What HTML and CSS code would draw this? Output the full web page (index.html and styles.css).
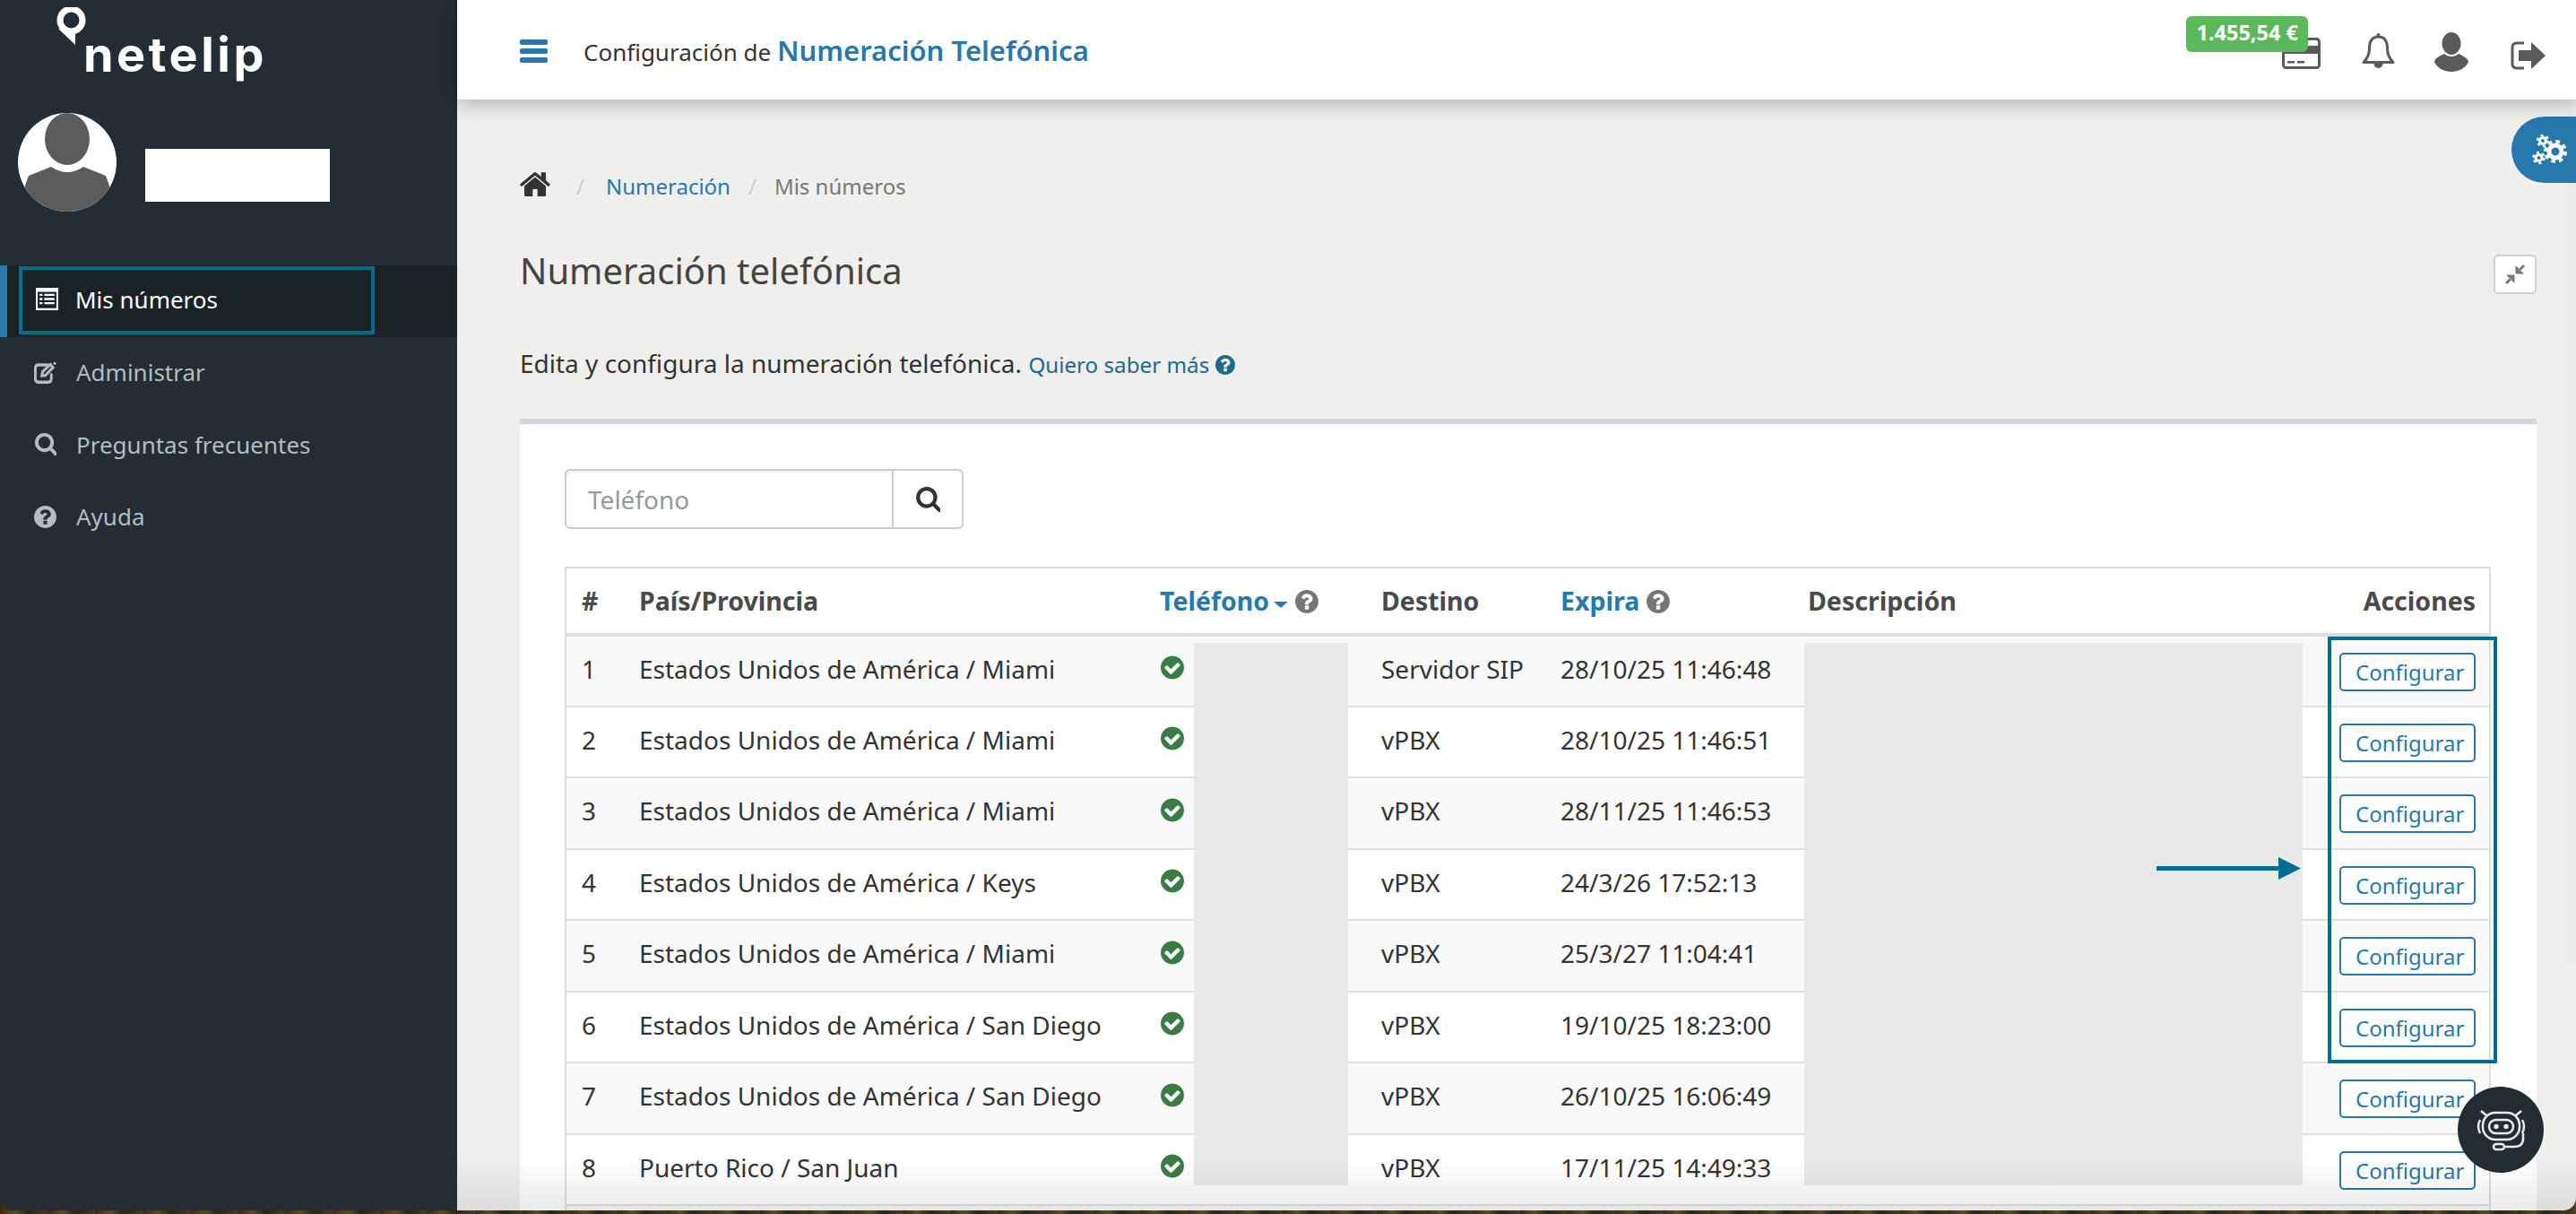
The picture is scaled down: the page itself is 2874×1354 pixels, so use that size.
FILE: index.html
```html
<!DOCTYPE html>
<html lang="es">
<head>
    <meta charset="UTF-8">
    <title>Numeración telefónica</title>
    <link rel="stylesheet" href="styles.css">
</head>
<body>
    <svg class="defs" width="0" height="0">
        <symbol id="i-help" viewBox="128 128 1536 1536"><path d="M1024 1376v-192q0-14-9-23t-23-9h-192q-14 0-23 9t-9 23v192q0 14 9 23t23 9h192q14 0 23-9t9-23zm256-672q0-88-55.500-163t-138.500-116-170-41q-243 0-371 213-15 24 8 42l132 100q7 6 19 6 16 0 25-12 53-68 86-92 34-24 86-24 48 0 85.500 26t37.500 59q0 38-20 61t-68 45q-63 28-115.500 86.500t-52.500 125.500v36q0 14 9 23t23 9h192q14 0 23-9t9-23q0-19 21.500-49.500t54.500-49.500q32-18 49-28.500t46-35 44.500-48 28-60.500 12.500-81zm384 192q0 209-103 385.500t-279.500 279.500-385.500 103-385.500-103-279.500-279.500-103-385.500 103-385.500 279.500-279.500 385.500-103 385.500 103 279.500 279.500 103 385.500z"/></symbol>
        <symbol id="i-check" viewBox="128 128 1536 1536"><path d="M1412 734q0-28-18-46l-91-90q-19-19-45-19t-45 19l-408 407-226-226q-19-19-45-19t-45 19l-91 90q-18 18-18 46 0 27 18 45l362 362q19 19 45 19 27 0 46-19l543-543q18-18 18-45zm252 162q0 209-103 385.500t-279.500 279.500-385.500 103-385.500-103-279.500-279.500-103-385.500 103-385.500 279.500-279.500 385.500-103 385.500 103 279.500 279.500 103 385.500z"/></symbol>
        <symbol id="i-search" viewBox="0 128 1664 1664"><path d="M1216 832q0-185-131.500-316.500t-316.500-131.500-316.500 131.500-131.500 316.500 131.500 316.500 316.500 131.500 316.500-131.500 131.500-316.500zm512 832q0 52-38 90t-90 38q-54 0-90-38l-343-342q-179 124-399 124-143 0-273.500-55.500t-225-150-150-225-55.500-273.500 55.500-273.500 150-225 225-150 273.500-55.500 273.500 55.500 225 150 150 225 55.500 273.500q0 220-124 399l343 343q37 37 37 90z"/></symbol>
    </svg>

    <div class="app">
        <aside class="sidebar">
            <div class="logo">
                <svg class="logo-pin" viewBox="0 0 33 42"><circle cx="16.5" cy="14.500" r="12.500" fill="none" stroke="#fff" stroke-width="7"/><path d="M2 24L21 42V26z" fill="#fff"/></svg>
                <span class="logo-text">netelip</span>
            </div>
            <div class="user-box">
                <svg class="avatar" viewBox="0 0 110 110">
                    <defs><clipPath id="avatar-clip"><circle cx="55" cy="55" r="55"/></clipPath></defs>
                    <circle cx="55" cy="55" r="55" fill="#fff"/>
                    <g clip-path="url(#avatar-clip)" fill="#5c5c5c">
                        <ellipse cx="55" cy="29" rx="25" ry="29"/>
                        <path d="M8 81L12 70 37 60Q55 72 73 60L98 70 102 81 102 110H8z"/>
                    </g>
                </svg>
                <div class="user-name"></div>
            </div>
            <nav class="menu">
                <a class="menu-item active">
                    <span class="focus-box">
                        <svg class="menu-icon" viewBox="0 0 24 22" preserveAspectRatio="none"><path fill="#fff" d="M0 0h24v22H0z"/><path fill="#1a2226" d="M2 4h20v16H2z"/><path fill="#fff" d="M4 6h3v2H4zM9 6h11v2H9zM4 10h3v2H4zM9 10h11v2H9zM4 14h3v2H4zM9 14h11v2H9z"/></svg>
                        Mis números
                    </span>
                </a>
                <a class="menu-item">
                    <svg class="menu-icon" viewBox="0 0 26 22" preserveAspectRatio="none"><path fill="none" stroke="currentColor" stroke-width="3" stroke-linecap="round" d="M20 13v4q0 3.500-3.500 3.500H5Q1.500 20.500 1.500 17V7Q1.500 3.500 5 3.500h11"/><path fill="none" stroke="currentColor" stroke-width="3" d="M9 14l1-4L19 3l3 3-9 8z"/><circle cx="24" cy="2" r="1.500" fill="currentColor"/></svg>
                    Administrar
                </a>
                <a class="menu-item">
                    <svg class="menu-icon" fill="currentColor"><use href="#i-search"/></svg>
                    Preguntas frecuentes
                </a>
                <a class="menu-item">
                    <svg class="menu-icon" fill="currentColor"><use href="#i-help"/></svg>
                    Ayuda
                </a>
            </nav>
        </aside>

        <div class="main">
            <header class="topbar">
                <div class="burger"><i></i><i></i><i></i></div>
                <div class="page-name">Configuración de <b>Numeración Telefónica</b></div>
                <div class="top-icons">
                    <div class="card-wrap">
                        <span class="saldo">1.455,54 €</span>
                        <svg class="ic-card" viewBox="0 0 43 35"><rect x="1.500" y="1.500" width="40" height="32" rx="3" fill="none" stroke="#5a5a5a" stroke-width="3"/><path fill="#5a5a5a" d="M2 9h39v9H2zM6 26h8v2.500H6zM17 26h8v2.500h-8z"/></svg>
                    </div>
                    <svg class="ic-bell" viewBox="0 0 37 40"><path d="M18.500 5C11 5 8.500 11 8.500 18c0 7-2 11-6.500 15.500h33C30.500 29 28.500 25 28.500 18c0-7-2.500-13-10-13z" fill="none" stroke="#5a5a5a" stroke-width="3" stroke-linejoin="round"/><circle cx="18.500" cy="3" r="2" fill="#5a5a5a"/><path d="M13.500 35a5 5 0 0 0 10 0z" fill="#5a5a5a"/></svg>
                    <svg class="ic-user" viewBox="0 0 38 44"><ellipse cx="19" cy="12.500" rx="10.500" ry="12.500" fill="#5a5a5a"/><path d="M0 33c1-5 7-7 11-9 4 4 12 4 16 0 4 2 10 4 11 9-3 7-11 11-19 11S3 40 0 33z" fill="#5a5a5a"/></svg>
                    <svg class="ic-out" viewBox="0 0 39 32"><path d="M15 2H7Q2 2 2 7v18q0 5 5 5h8" fill="none" stroke="#5a5a5a" stroke-width="3"/><path d="M9 10h14V1l16 15-16 15v-9H9z" fill="#5a5a5a"/></svg>
                </div>
            </header>

            <div class="content">
                <ol class="crumbs">
                    <li><svg class="ic-home" viewBox="90 200 1612 1340"><path d="M1472 992v480q0 26-19 45t-45 19h-384v-384h-256v384h-384q-26 0-45-19t-19-45v-480q0-1 .5-3t.5-3l575-474 575 474q1 2 1 6zm223-69l-62 74q-8 9-21 11h-3q-13 0-21-7l-692-577-692 577q-12 8-24 7-13-2-21-11l-62-74q-8-10-7-23.500t11-21.500l719-599q32-26 76-26t76 26l244 204v-195q0-14 9-23t23-9h192q14 0 23 9t9 23v408l219 182q10 8 11 21.500t-7 23.500z"/></svg></li>
                    <li class="sep sep-first">/</li>
                    <li><a>Numeración</a></li>
                    <li class="sep">/</li>
                    <li class="current">Mis números</li>
                </ol>

                <div class="title-row">
                    <h1>Numeración telefónica</h1>
                    <button class="collapse-btn"><svg viewBox="0 0 22 22"><path fill="#777" d="M11.500 1V10.500H21zM15 5l5-5 2 2-5 5zM10.500 21V11.500H1zM7 17l-5 5-2-2 5-5z"/></svg></button>
                </div>

                <p class="intro">Edita y configura la numeración telefónica. <a>Quiero saber más <svg class="ic-q"><use href="#i-help"/></svg></a></p>

                <section class="panel">
                    <form class="search">
                        <input type="text" placeholder="Teléfono">
                        <span class="search-btn"><svg><use href="#i-search"/></svg></span>
                    </form>

                    <div class="table-wrap">
                        <table class="numbers">
                            <colgroup>
                                <col class="c-num"><col class="c-place"><col class="c-phone"><col class="c-dest"><col class="c-exp"><col class="c-desc"><col class="c-act">
                            </colgroup>
                            <thead>
                                <tr>
                                    <th>#</th>
                                    <th>País/Provincia</th>
                                    <th><a>Teléfono</a><span class="caret"></span><svg class="th-q"><use href="#i-help"/></svg></th>
                                    <th>Destino</th>
                                    <th><a>Expira</a><svg class="th-q gap"><use href="#i-help"/></svg></th>
                                    <th>Descripción</th>
                                    <th class="right">Acciones</th>
                                </tr>
                            </thead>
                            <tbody>
                                <tr><td>1</td><td>Estados Unidos de América / Miami</td><td><svg class="ok"><use href="#i-check"/></svg></td><td>Servidor SIP</td><td>28/10/25 11:46:48</td><td></td><td class="right"><a class="btn">Configurar</a></td></tr>
                                <tr><td>2</td><td>Estados Unidos de América / Miami</td><td><svg class="ok"><use href="#i-check"/></svg></td><td>vPBX</td><td>28/10/25 11:46:51</td><td></td><td class="right"><a class="btn">Configurar</a></td></tr>
                                <tr><td>3</td><td>Estados Unidos de América / Miami</td><td><svg class="ok"><use href="#i-check"/></svg></td><td>vPBX</td><td>28/11/25 11:46:53</td><td></td><td class="right"><a class="btn">Configurar</a></td></tr>
                                <tr><td>4</td><td>Estados Unidos de América / Keys</td><td><svg class="ok"><use href="#i-check"/></svg></td><td>vPBX</td><td>24/3/26 17:52:13</td><td></td><td class="right"><a class="btn">Configurar</a></td></tr>
                                <tr><td>5</td><td>Estados Unidos de América / Miami</td><td><svg class="ok"><use href="#i-check"/></svg></td><td>vPBX</td><td>25/3/27 11:04:41</td><td></td><td class="right"><a class="btn">Configurar</a></td></tr>
                                <tr><td>6</td><td>Estados Unidos de América / San Diego</td><td><svg class="ok"><use href="#i-check"/></svg></td><td>vPBX</td><td>19/10/25 18:23:00</td><td></td><td class="right"><a class="btn">Configurar</a></td></tr>
                                <tr><td>7</td><td>Estados Unidos de América / San Diego</td><td><svg class="ok"><use href="#i-check"/></svg></td><td>vPBX</td><td>26/10/25 16:06:49</td><td></td><td class="right"><a class="btn">Configurar</a></td></tr>
                                <tr><td>8</td><td>Puerto Rico / San Juan</td><td><svg class="ok"><use href="#i-check"/></svg></td><td>vPBX</td><td>17/11/25 14:49:33</td><td></td><td class="right"><a class="btn">Configurar</a></td></tr>
                                <tr><td></td><td></td><td></td><td></td><td></td><td></td><td></td></tr>
                            </tbody>
                        </table>

                        <!-- hidden data and the marker drawn on top of the table -->
                        <div class="blur blur-phone"></div>
                        <div class="blur blur-desc"></div>
                        <svg class="mark-arrow" viewBox="0 0 161 25"><path fill="#006e91" d="M0 10h136V0l25 12.500L136 25V15H0z"/></svg>
                        <div class="mark-box"></div>
                    </div>
                </section>
            </div>

            <div class="scroll-track"></div>
            <div class="fade-bottom"></div>

            <a class="tab-tools">
                <svg viewBox="0 0 40 34" fill="none" stroke="#fff">
                    <circle cx="26" cy="19" r="7" stroke-width="5"/>
                    <circle cx="26" cy="19" r="11" stroke-width="4" stroke-dasharray="4.500 4.140"/>
                    <circle cx="12" cy="7" r="3.500" stroke-width="3"/>
                    <circle cx="12" cy="7" r="6" stroke-width="2.500" stroke-dasharray="3 3.280"/>
                    <circle cx="7.500" cy="26" r="3.500" stroke-width="3"/>
                    <circle cx="7.500" cy="26" r="6" stroke-width="2.500" stroke-dasharray="3 3.280"/>
                </svg>
            </a>

            <a class="bot">
                <svg viewBox="0 0 57 47" fill="none" stroke="#e8ecec" stroke-width="2.500">
                    <rect x="8" y="4" width="41" height="30" rx="14"/>
                    <rect x="15" y="12" width="27" height="15" rx="7.500"/>
                    <circle cx="23" cy="19.500" r="1.500" fill="#e8ecec"/>
                    <circle cx="34" cy="19.500" r="1.500" fill="#e8ecec"/>
                    <path d="M5 12Q1 19 5 27M52 12Q56 19 52 27M53 27v6q0 9-10 9H33"/>
                    <rect x="20" y="39" width="12" height="6" rx="3"/>
                    <path d="M12 7L6 2M45 7l6-5"/>
                </svg>
            </a>
        </div>
    </div>
</body>
</html>
```

FILE: styles.css
```css
* {
    box-sizing: border-box;
}

html,
body {
    margin: 0;
    height: 1354px;
    overflow: hidden;
}

body {
    font-family: "Noto Sans", "Open Sans", sans-serif;
    font-size: 28px;
    color: #333;
    background: repeating-linear-gradient(90deg, #3b2a14 0, #5c4a22 17px, #2a2412 31px, #4d3a1c 53px);
}

.defs {
    position: absolute;
}

.app {
    display: flex;
    height: 1350px;
    overflow: hidden;
    border-radius: 0 0 14px 14px;
}

/* sidebar */
.sidebar {
    width: 510px;
    flex: none;
    background-color: #232d33;
    color: #b0bec5;
}

.logo {
    display: flex;
    height: 126px;
    padding: 8px 0 0 63px;
}

.logo-pin {
    flex: none;
    width: 33px;
    height: 42px;
}

.logo-text {
    font-family: Inter, sans-serif;
    font-weight: 700;
    font-size: 54px;
    letter-spacing: 3.500px;
    line-height: 70px;
    margin: 18px 0 0 -3px;
    color: #fff;
}

.user-box {
    display: flex;
    align-items: flex-start;
    height: 170px;
    padding-left: 20px;
}

.avatar {
    width: 110px;
    height: 110px;
}

.user-name {
    width: 206px;
    height: 59px;
    margin: 40px 0 0 32px;
    background-color: #fff;
}

.menu-item {
    display: flex;
    align-items: center;
    height: 80.300px;
    padding-left: 38px;
    padding-bottom: 2px;
    gap: 22px;
    font-size: 26px;
}

.menu-item.active {
    border-left: 8px solid #2678ad;
    padding-left: 13px;
    padding-bottom: 0;
    background-color: #1a2226;
    color: #fff;
}

.focus-box {
    display: flex;
    align-items: center;
    gap: 19px;
    width: 397px;
    height: 76px;
    margin-top: -3px;
    padding: 0 0 2px 15px;
    border: 4px solid #006e91;
}

.menu-icon {
    width: 25px;
    height: 25px;
    flex: none;
}

/* top bar */
.main {
    position: relative;
    flex: 1;
    min-width: 0;
    display: flex;
    flex-direction: column;
    background-color: #efefed;
}

.topbar {
    position: relative;
    z-index: 2;
    display: flex;
    align-items: center;
    flex: none;
    height: 111px;
    padding-left: 70px;
    background-color: #fff;
    box-shadow: 0 4px 22px rgba(0, 0, 0, 0.28);
}

.burger {
    display: flex;
    flex-direction: column;
    gap: 4px;
    width: 31px;
    margin-top: 2px;
}

.burger i {
    display: block;
    height: 6px;
    border-radius: 2px;
    background-color: #2678ad;
}

.page-name {
    margin-left: 40px;
    font-size: 26px;
    color: #333;
}

.page-name b {
    font-size: 31px;
    font-weight: 600;
    color: #2678ad;
}

.top-icons {
    display: flex;
    align-items: flex-start;
    margin-left: auto;
    margin-right: 34px;
    height: 100%;
}

.card-wrap {
    position: relative;
    margin-right: 46px;
    padding-top: 42px;
}

.saldo {
    position: absolute;
    top: 18px;
    right: 14px;
    padding: 0 11px;
    height: 40px;
    line-height: 37px;
    border-radius: 6px;
    background-color: #5cb85c;
    color: #fff;
    font-size: 23.500px;
    font-weight: 700;
    white-space: nowrap;
}

.ic-card {
    display: block;
    width: 43px;
    height: 35px;
}

.ic-bell {
    width: 37px;
    height: 40px;
    margin: 36px 44px 0 0;
}

.ic-user {
    width: 38px;
    height: 44px;
    margin: 36px 47px 0 0;
}

.ic-out {
    width: 39px;
    height: 32px;
    margin-top: 46px;
}

/* page content */
.content {
    flex: 1;
    display: flex;
    flex-direction: column;
    min-height: 0;
    padding: 76px 44px 0 70px;
}

.crumbs {
    display: flex;
    flex: none;
    align-items: center;
    height: 40px;
    margin: 0;
    padding: 0;
    list-style: none;
    font-size: 24px;
}

.crumbs a {
    color: #2678ad;
}

.crumbs .sep {
    color: #ccc;
    margin: 0 20px;
}

.crumbs .sep-first {
    margin: 0 24px 0 29px;
}

.crumbs .current {
    color: #777;
}

.ic-home {
    display: block;
    width: 34px;
    height: 28px;
    fill: #333;
    margin-top: -5px;
}

.title-row {
    display: flex;
    flex: none;
    align-items: center;
    justify-content: space-between;
    margin-top: 46px;
    height: 56px;
}

h1 {
    margin: 0;
    font-size: 40px;
    font-weight: 400;
    color: #444;
}

.collapse-btn {
    display: flex;
    align-items: center;
    justify-content: center;
    width: 48px;
    height: 44px;
    margin-top: 10px;
    padding: 0;
    border: 2px solid #d0d0d0;
    border-radius: 5px;
    background-color: #fff;
}

.collapse-btn svg {
    width: 22px;
    height: 22px;
}

.intro {
    flex: none;
    margin: 56px 0 0;
    height: 40px;
    line-height: 40px;
}

.intro a {
    font-size: 24.200px;
    color: #21688f;
}

.ic-q {
    width: 22px;
    height: 22px;
    fill: #21688f;
    vertical-align: -2px;
}

.panel {
    flex: 1;
    min-height: 0;
    margin-top: 42px;
    padding: 50px 51px 0 50px;
    border-top: 6px solid #d2d6de;
    background-color: #fff;
}

.search {
    display: flex;
    width: 445px;
    height: 67px;
    border: 2px solid #ccc;
    border-radius: 6px;
}

.search input {
    flex: 1;
    min-width: 0;
    padding: 0 24px;
    border: none;
    outline: none;
    background: none;
    font: inherit;
    border-radius: 6px;
    box-shadow: inset 0 2px 2px rgba(0, 0, 0, 0.07);
}

.search input::placeholder {
    color: #999;
}

.search-btn {
    display: flex;
    align-items: center;
    justify-content: center;
    width: 78px;
    border-left: 2px solid #ccc;
}

.search-btn svg {
    width: 28px;
    height: 28px;
    fill: #333;
}

/* table */
.table-wrap {
    position: relative;
    margin-top: 42px;
}

.numbers {
    width: 100%;
    table-layout: fixed;
    border-collapse: collapse;
    border: 2px solid #ddd;
}

.c-num { width: 65px; }
.c-place { width: 581px; }
.c-phone { width: 247px; }
.c-dest { width: 200px; }
.c-exp { width: 276px; }
.c-act { width: 279px; }

.numbers th {
    height: 75px;
    padding: 0 17px 1px;
    text-align: left;
    font-size: 28.500px;
    font-weight: 700;
    color: #4a4a4a;
    border-bottom: 4px solid #ddd;
    white-space: nowrap;
}

.numbers th a {
    color: #2678ad;
}

.numbers td {
    height: 79.500px;
    padding: 0 17px 5px;
    border-bottom: 2px solid #e0e0e0;
    white-space: nowrap;
}

.numbers tbody tr:nth-child(odd) {
    background-color: #f9f9f9;
}

.numbers .right {
    padding-right: 15px;
    text-align: right;
}

.caret {
    display: inline-block;
    margin: 0 8px 0 5px;
    border-top: 7px solid #2678ad;
    border-left: 8px solid transparent;
    border-right: 8px solid transparent;
    vertical-align: 3px;
}

.th-q {
    width: 26px;
    height: 26px;
    fill: #777;
    vertical-align: -3px;
}

.th-q.gap {
    margin-left: 8px;
}

.ok {
    display: block;
    width: 26px;
    height: 27px;
    fill: #3a7d44;
    margin: -2px 0 0 1px;
}

.btn {
    display: inline-block;
    width: 152px;
    height: 43px;
    margin-top: 7px;
    padding-left: 16px;
    text-align: left;
    line-height: 40px;
    font-size: 24px;
    color: #2678ad;
    background-color: #fff;
    border: 2px solid #2678ad;
    border-radius: 5px;
}

.blur {
    position: absolute;
    top: 85px;
    height: 605px;
    background-color: #e9e9e9;
}

.blur-phone {
    left: 702px;
    width: 172px;
}

.blur-desc {
    left: 1383px;
    width: 556px;
}

.mark-arrow {
    position: absolute;
    left: 1776px;
    top: 324px;
    width: 161px;
    height: 25px;
}

.mark-box {
    position: absolute;
    left: 1967px;
    top: 78px;
    width: 189px;
    height: 476px;
    border: 4px solid #006e91;
}

/* things floating over the page */
.scroll-track {
    position: absolute;
    top: 111px;
    right: 0;
    width: 11px;
    height: 964px;
    background-color: #ebebe9;
}

.fade-bottom {
    position: absolute;
    left: 0;
    right: 0;
    bottom: 0;
    height: 60px;
    background: linear-gradient(rgba(0, 0, 0, 0), rgba(0, 0, 0, 0.08));
    pointer-events: none;
}

.tab-tools {
    position: absolute;
    top: 130px;
    right: 0;
    display: flex;
    align-items: center;
    width: 72px;
    height: 74px;
    padding-left: 23px;
    border-radius: 37px 0 0 37px;
    background-color: #2678ad;
}

.tab-tools svg {
    width: 40px;
    height: 34px;
}

.bot {
    position: absolute;
    left: 2232px;
    top: 1212px;
    display: flex;
    align-items: center;
    justify-content: center;
    width: 96px;
    height: 96px;
    border-radius: 50%;
    background-color: #222d32;
}

.bot svg {
    width: 57px;
    height: 47px;
}
```
